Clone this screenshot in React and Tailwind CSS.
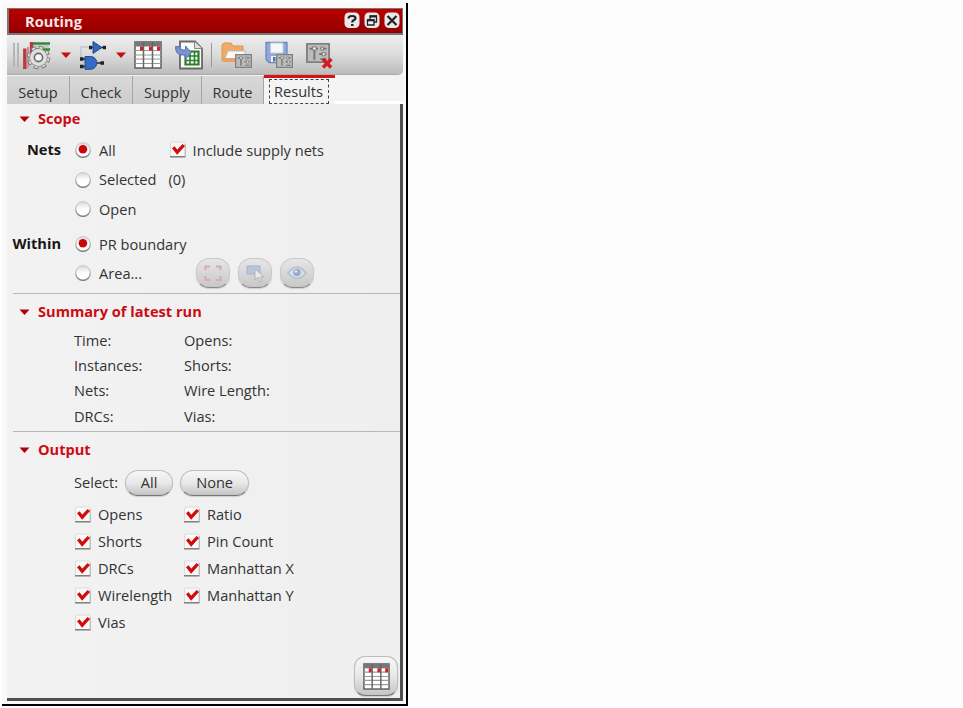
import React from "react";

function Radio({ on }) {
  return (
    <svg className="h-[18px] w-[18px] shrink-0" viewBox="0 0 18 18">
      <defs>
        <linearGradient id="radioFill" x1="0" y1="0" x2="0" y2="1">
          <stop offset="0" stopColor="#d9d9d9" />
          <stop offset=".5" stopColor="#fff" />
        </linearGradient>
        <linearGradient id="radioEdge" x1="0" y1="0" x2="0" y2="1">
          <stop offset="0.35" stopColor="#d2d2d2" />
          <stop offset="1" stopColor="#777" />
        </linearGradient>
      </defs>
      <circle cx="9" cy="9" r="7.3" fill="url(#radioFill)" stroke="url(#radioEdge)" strokeWidth="1.4" />
      {on && <circle cx="8.9" cy="8.2" r="4.3" fill="#cc0505" />}
    </svg>
  );
}

function Check() {
  return (
    <svg className="h-[18px] w-[18px] shrink-0" viewBox="0 0 18 18">
      <rect x="1.5" y="1" width="14.5" height="14.5" rx="1" fill="#f8f8f8" stroke="#dcdcdc" />
      <path d="M1 15.800h15.500" stroke="#777" strokeWidth="1.400" />
      <path d="M16.300 3v12.500" stroke="#b5b5b5" />
      <path d="M4.300 6.300l3.900 4.900 6.600-7.200" fill="none" stroke="#d20a0a" strokeWidth="3.300" />
    </svg>
  );
}

function Heading({ children, h }) {
  return (
    <div className={`flex items-center pl-3 text-[14.6px] font-bold text-[#cb0b14] ${h}`}>
      <svg className="mr-2 h-3 w-[11px]" viewBox="0 0 11 12">
        <path d="M.5 3.500h10l-5 5.500z" fill="#b4000b" />
      </svg>
      <h2 className="pb-px">{children}</h2>
    </div>
  );
}

function Option({ label, on, text, h, children }) {
  return (
    <div className={`flex items-center ${h}`}>
      <span className="w-[54px] pb-px text-right font-bold whitespace-nowrap text-[#161616]">{label}</span>
      <span className="ml-[13px] flex"><Radio on={on} /></span>
      <span className="ml-[7px]">{text}</span>
      {children}
    </div>
  );
}

function TableIcon({ className }) {
  return (
    <svg className={className} viewBox="0 0 28 28">
      <rect x="1" y="1" width="26" height="26" fill="#fff" stroke="#666" strokeWidth="1.600" />
      <path d="M1 1h26v4.500H1z" fill="#777" />
      <path d="M1 9.500h26M1 14h26M1 18h26M1 22.500h26" stroke="#999" strokeWidth="1.200" />
      <path d="M9.500 1v26M18.500 1v26" stroke="#666" strokeWidth="1.500" />
      <path d="M6 5.500h3v4H6zM15 5.500h3v4h-3zM23 5.500h3v4h-3z" fill="#d91c24" />
    </svg>
  );
}

function Arrow() {
  return (
    <svg className="h-[6px] w-[10px]" viewBox="0 0 10 6"><path d="M0 .5h10L5 6z" fill="#c90b12" /></svg>
  );
}

function Gear() {
  return (
    <svg className="h-[30px] w-[30px]" viewBox="0 0 30 30">
      <path d="M8 3.500h20M8 9.500h20M18 13.500h9" stroke="#2f8b37" strokeWidth="2.600" />
      <path d="M10 6.500h17" stroke="#c3c9c3" strokeWidth="2.500" />
      <path d="M2.800 8.500v20.500M9.500 2v12" stroke="#b53c42" strokeWidth="3.400" />
      <path d="M6 7v21" stroke="#d48e8e" strokeWidth="2" />
      <circle cx="16.500" cy="17.500" r="9.300" fill="none" stroke="#777" strokeWidth="5" strokeDasharray="4.400 2.900" />
      <circle cx="16.500" cy="17.500" r="9.300" fill="none" stroke="#dcdcdc" strokeWidth="3.200" strokeDasharray="3 4.300" strokeDashoffset="-.7" />
      <circle cx="16.500" cy="17.500" r="6.500" fill="#f5f5f5" stroke="#8a8a8a" strokeWidth="5.600" />
      <circle cx="16.500" cy="17.500" r="6.700" fill="none" stroke="#dedede" strokeWidth="3.600" />
      <circle cx="16.500" cy="17.500" r="4" fill="#f7f7f7" stroke="#666" strokeWidth="1.400" />
    </svg>
  );
}

function Gates() {
  return (
    <svg className="h-[30px] w-[28px]" viewBox="0 0 28 30">
      <path d="M2 17V7h11" fill="none" stroke="#a9b9d7" />
      <path d="M10 7.500h4M22 7.500h5M1 19h6M1 26.500h6M18 23h7" stroke="#222" strokeWidth="1.500" />
      <path d="M10 7.500h3M24 7.500h3M1 19h3.500M1 26.500h3.500M21.500 23H25" stroke="#222" strokeWidth="3.300" />
      <path d="M14 1.500l9 6-9 6z" fill="#3568b8" stroke="#244e91" />
      <path d="M6 16.500h5.500a6.300 6.300 0 010 12.800H6z" fill="#356bc4" stroke="#244e91" />
    </svg>
  );
}

function Sheet() {
  return (
    <svg className="h-[30px] w-[29px]" viewBox="0 0 29 30">
      <path d="M6 1.500h15l7 7v20H6z" fill="#fbfbfb" stroke="#686868" strokeWidth="1.800" />
      <path d="M20.500 1.500v7H28" fill="#e0e0e0" stroke="#888" />
      <path d="M11.500 11.500h13v13h-13z" fill="#fff" stroke="#287f2e" strokeWidth="2.200" />
      <path d="M16 12v12M20.500 12v12M11 16h14M11 20.500h14" stroke="#287f2e" strokeWidth="1.600" />
      <path d="M1.500 6.500h4.500q0 3.500 3 3.500h2.500V6l6 6.700-6 6.300v-4H8Q1.500 15 1.500 6.500z" fill="#7894cc" stroke="#5876ae" />
    </svg>
  );
}

function Panel({ x = 0, y = 0, w = 16, h = 14 }) {
  return (
    <svg x={x} y={y} width={w} height={h} viewBox="0 0 20 18" preserveAspectRatio="none">
      <rect x=".7" y=".7" width="18.600" height="16.600" fill="#bcbcbc" stroke="#808080" strokeWidth="1.700" />
      <path d="M3 5h7M7 4v11M11 10h6M12 5h5M12 14.500h5" stroke="#6e6e6e" strokeWidth="1.500" />
      <path d="M5.500 3.500h3v3h-3zM13.500 8.500h2.500v3h-2.500zM12.500 3.500h2v3h-2z" fill="#e9e9e9" stroke="#777" strokeWidth=".8" />
    </svg>
  );
}

function Folder() {
  return (
    <svg className="h-[28px] w-[31px]" viewBox="0 0 31 28">
      <path d="M1 20V4l2-2h7l2 3h10v9" fill="#f0ac66" stroke="#d89455" />
      <path d="M7 10h18l-5 10H3z" fill="#fafafa" stroke="#bbb" />
      <path d="M1.500 17h13v4h-13z" fill="#e8a267" />
      <Panel x={14} y={13} w={17} h={14} />
    </svg>
  );
}

function Disk() {
  return (
    <svg className="h-[28px] w-[28px]" viewBox="0 0 28 28">
      <path d="M1 1.500h21v20H4l-3-3z" fill="#90a9d8" stroke="#6c87bd" strokeWidth="1.300" />
      <path d="M5.500 2H18v10H5.500z" fill="#f7f7f7" stroke="#c0cbdc" />
      <path d="M6 15h9v6H6z" fill="#eee" />
      <path d="M8 16h2.500v4.500H8z" fill="#526fa5" />
      <Panel x={11} y={13} w={17} h={14} />
    </svg>
  );
}

function PanelDelete() {
  return (
    <svg className="h-[28px] w-[27px]" viewBox="0 0 27 28">
      <Panel x={0} y={2} w={24} h={20} />
      <path d="M17 18l8 8.500M25.500 18l-8.500 8.500" stroke="#d21c22" strokeWidth="3.500" />
    </svg>
  );
}

const pill = "border border-[#bdbdbd] border-b-[#777] bg-linear-to-b from-[#f7f7f7] via-[#e8e8e8] to-[#c4c4c4] shadow-[0_1px_1px_#9996]";

function Small({ children }) {
  return (
    <button className="flex h-[30px] w-[34px] items-center justify-center rounded-[13px] border border-[#c9c9c9] border-b-[#888] bg-linear-to-b from-[#e6e6e6] to-[#c8c8c8] pb-px shadow-[0_1px_1px_#9996]">
      {children}
    </button>
  );
}

function TitleButton({ children }) {
  return (
    <svg className="h-[17px] w-[16px]" viewBox="0 0 16 17">
      <rect x=".5" y=".5" width="15" height="15.500" rx="4.500" fill="#e8e8e8" />
      {children}
    </svg>
  );
}

const tabs = [
  ["Setup", "w-[63px]"],
  ["Check", "w-[63px]"],
  ["Supply", "w-[69px]"],
  ["Route", "w-[62px]"],
];

const outputs = [["Opens", "Ratio"], ["Shorts", "Pin Count"], ["DRCs", "Manhattan X"], ["Wirelength", "Manhattan Y"], ["Vias"]];

export default function App() {
  return (
    <div className="h-[708px] w-[963px] overflow-hidden bg-[#fdfdfd] pl-[2px] pt-[3px] font-['Open_Sans','Noto_Sans',sans-serif] text-[14.6px] leading-none text-[#333]">
      <div className="flex h-[703px] w-[406px] flex-col border-r-2 border-b-2 border-black bg-[#f9f9f9] pt-[5px] pl-[5px]">
        <header className="flex h-[27px] w-[396px] shrink-0 items-center border-t border-r border-b-2 border-l-2 border-[#777] bg-linear-to-b from-[#b90000] to-[#930000] pr-[2px] pb-[2px] pl-4">
          <h1 className="flex-1 pt-[2px] text-[14.6px] font-bold text-[#f5e4e4]">Routing</h1>
          <div className="flex gap-1">
            <TitleButton>
              <path d="M4.500 6.500q0-2.500 3.500-2.500t3.500 2.300q0 1.400-1.700 2T8.500 10.500" fill="none" stroke="#222" strokeWidth="2.200" />
              <path d="M7 12h2.500v2H7z" fill="#222" />
            </TitleButton>
            <TitleButton>
              <path d="M6 4h6.500v6H6z" fill="#eee" stroke="#222" strokeWidth="1.300" />
              <path d="M6 4.500h7" stroke="#222" strokeWidth="2" />
              <path d="M3.500 8H10v5H3.500z" fill="#eee" stroke="#222" strokeWidth="1.300" />
              <path d="M3 8.300h7.500" stroke="#222" strokeWidth="2" />
            </TitleButton>
            <TitleButton>
              <path d="M3.500 4l9 9M12.500 4l-9 9" stroke="#222" strokeWidth="2.200" />
            </TitleButton>
          </div>
        </header>
        <div className="flex h-[40px] w-[396px] shrink-0 items-center rounded-br-[5px] border-b border-[#aaa] bg-linear-to-b from-[#eee] via-[#dcdcdc] to-[#bcbcbc] pl-[6px]">
          <div className="h-6 w-[6px] border-x-2 border-[#b5b5b5]" />
          <div className="ml-[3px]"><Gear /></div>
          <div className="ml-[9px]"><Arrow /></div>
          <div className="ml-[8px]"><Gates /></div>
          <div className="ml-[9px]"><Arrow /></div>
          <TableIcon className="ml-[8px] h-[28px] w-[28px]" />
          <div className="ml-[12px]"><Sheet /></div>
          <div className="ml-[8px] h-6 w-px bg-[#999]" />
          <div className="ml-[9px]"><Folder /></div>
          <div className="ml-[13px]"><Disk /></div>
          <div className="ml-[13px]"><PanelDelete /></div>
        </div>
        <nav className="flex h-[29px] w-[397px] shrink-0 items-end bg-[#f3f3f3]">
          {tabs.map(([t, w]) => (
            <div key={t} className={`flex h-[28px] items-center justify-center border-r border-[#a5a5a5] bg-linear-to-b from-[#d8d8d8] to-[#cdcdcd] pt-[4px] ${w}`}>{t}</div>
          ))}
          <div className="flex h-[29px] w-[71px] justify-center border-t-[3px] border-[#d51313] bg-[#f4f4f4] pt-[1px] pr-[2px]">
            <span className="flex h-[25px] w-[60px] items-center justify-center border border-dashed border-[#444] pb-px">Results</span>
          </div>
          <div className="h-[3px] flex-1 bg-white" />
        </nav>
        <main className="flex h-[597px] w-[396px] shrink-0 flex-col border-r-[3px] border-b-[3px] border-[#505050] bg-linear-to-r from-[#f2f2f2] to-[#eeefee]">
          <section className="h-[189px] shrink-0">
            <Heading h="h-[29px]">Scope</Heading>
            <div className="pt-[2px]">
              <Option label="Nets" on text="All" h="h-[30px]">
                <span className="ml-[53px] flex items-center gap-[6px]"><Check /><span>Include supply nets</span></span>
              </Option>
              <Option text="Selected" h="h-[29px]"><span className="ml-3">(0)</span></Option>
              <Option text="Open" h="h-[30px]" />
            </div>
            <div className="pt-[5px]">
              <Option label="Within" on text="PR boundary" h="h-[30px]" />
              <Option text="Area..." h="h-[28px]">
                <span className="ml-[54px] flex gap-[8px]">
                  <Small>
                    <svg className="h-[18px] w-[20px]" viewBox="0 0 20 18"><path d="M2.500 6V2.500H7M13 2.500h4.500V6M17.500 12v4H13M7 16H2.500v-4" fill="none" stroke="#d8acaa" strokeWidth="2.200" /></svg>
                  </Small>
                  <Small>
                    <svg className="h-[18px] w-[20px]" viewBox="0 0 20 18"><path d="M2 2h13v8H2z" fill="#b9c5da" stroke="#a5b2ca" /><path d="M10 5v11l3-3 2 5 2-1-2-4h4z" fill="#ececec" stroke="#aaa" strokeWidth=".8" /></svg>
                  </Small>
                  <Small>
                    <svg className="h-[16px] w-[20px]" viewBox="0 0 20 16"><path d="M1 8q9-12 18 0-9 11-18 0z" fill="#d8dde6" stroke="#b0bdd1" strokeWidth="1.300" /><circle cx="10" cy="7.500" r="3.700" fill="#97abc9" /><circle cx="9" cy="6.500" r="1.200" fill="#eee" /></svg>
                  </Small>
                </span>
              </Option>
            </div>
          </section>
          <hr className="ml-[6px] shrink-0 border-[#b8b8b8]" />
          <section className="h-[137px] shrink-0">
            <Heading h="h-[35px]">Summary of latest run</Heading>
            <div className="grid grid-cols-[110px_1fr] pl-[67px]">
              {["Time:", "Opens:", "Instances:", "Shorts:", "Nets:", "Wire Length:", "DRCs:", "Vias:"].map((t) => (
                <div key={t} className="flex h-[25.3px] items-center pb-[3px]">{t}</div>
              ))}
            </div>
          </section>
          <hr className="ml-[6px] shrink-0 border-[#b8b8b8]" />
          <section className="flex flex-1 flex-col">
            <Heading h="h-[36px]">Output</Heading>
            <div className="flex h-[30px] items-center pl-[67px]">
              <span className="pb-px">Select:</span>
              <button className={`ml-[7px] h-[26px] w-[48px] rounded-full pb-[2px] ${pill}`}>All</button>
              <button className={`ml-[7px] h-[26px] w-[69px] rounded-full pb-[2px] ${pill}`}>None</button>
            </div>
            <div className="grid grid-cols-[109px_1fr] pt-[3px] pl-[67px]">
              {outputs.flat().map((t) => (
                <label key={t} className="flex h-[27px] items-center gap-[6px] whitespace-nowrap"><Check /><span className="pb-px">{t}</span></label>
              ))}
            </div>
            <div className="mt-auto flex justify-end pr-[2px] pb-[2px]">
              <button className={`flex h-[40px] w-[44px] items-center justify-center rounded-[11px] ${pill}`}><TableIcon className="h-[27px] w-[27px]" /></button>
            </div>
          </section>
        </main>
      </div>
    </div>
  );
}
